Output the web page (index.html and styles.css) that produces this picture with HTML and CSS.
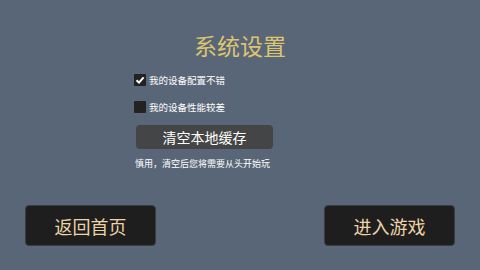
FILE: index.html
```html
<!DOCTYPE html>
<html lang="zh">
<head>
    <meta charset="UTF-8">
    <title>系统设置</title>
    <link rel="stylesheet" href="styles.css">
</head>
<body>
    <div class="settings">
        <h1 class="title">系统设置</h1>
        <div class="options">
            <label class="option">
                <span class="box checked">
                    <svg viewBox="0 0 12 12" width="12" height="12"><path d="M2.5 6.2 L5 8.6 L9.6 3.4" fill="none" stroke="#fff" stroke-width="2"/></svg>
                </span>
                <span>我的设备配置不错</span>
            </label>
            <label class="option">
                <span class="box"></span>
                <span>我的设备性能较差</span>
            </label>
            <button class="clear-btn">清空本地缓存</button>
            <p class="hint">慎用，清空后您将需要从头开始玩</p>
        </div>
        <div class="actions">
            <button class="big-btn">返回首页</button>
            <button class="big-btn">进入游戏</button>
        </div>
    </div>
</body>
</html>
```

FILE: styles.css
```css
body {
    margin: 0;
    width: 480px;
    height: 270px;
    background: #596677;
    font-family: "Noto Sans CJK SC", "Noto Sans", sans-serif;
    overflow: hidden;
}
.settings {
    display: flex;
    flex-direction: column;
    height: 270px;
}
.title {
    margin: 30px 0 0;
    text-align: center;
    font-size: 23px;
    font-weight: normal;
    line-height: 30px;
    color: #dcc56f;
}
.options {
    margin: 13px 0 0 134px;
    display: flex;
    flex-direction: column;
    align-items: flex-start;
}
.option {
    display: flex;
    align-items: center;
    gap: 3px;
    height: 14px;
    font-size: 9.5px;
    color: #fff;
    margin-bottom: 13px;
}
.option + .option {
    margin-bottom: 11px;
}
.box {
    width: 12px;
    height: 12px;
    background: #222;
    border-radius: 1px;
    display: flex;
}
.clear-btn {
    margin: 0 0 0 2px;
    width: 137px;
    height: 24px;
    border: none;
    border-radius: 4px;
    background: #444546;
    color: #fff;
    font-family: inherit;
    font-size: 14px;
    padding: 0;
}
.hint {
    margin: 8px 0 0 1px;
    font-size: 9px;
    color: #fff;
}
.actions {
    margin-top: auto;
    margin-bottom: 24px;
    display: flex;
    justify-content: space-between;
    padding: 0 25px;
}
.big-btn {
    width: 131px;
    height: 41px;
    border: 1px solid #3a3d42;
    border-radius: 4px;
    background: #1f1e1e;
    color: #ecd4a8;
    font-family: inherit;
    font-size: 18px;
    padding: 0;
}
```
